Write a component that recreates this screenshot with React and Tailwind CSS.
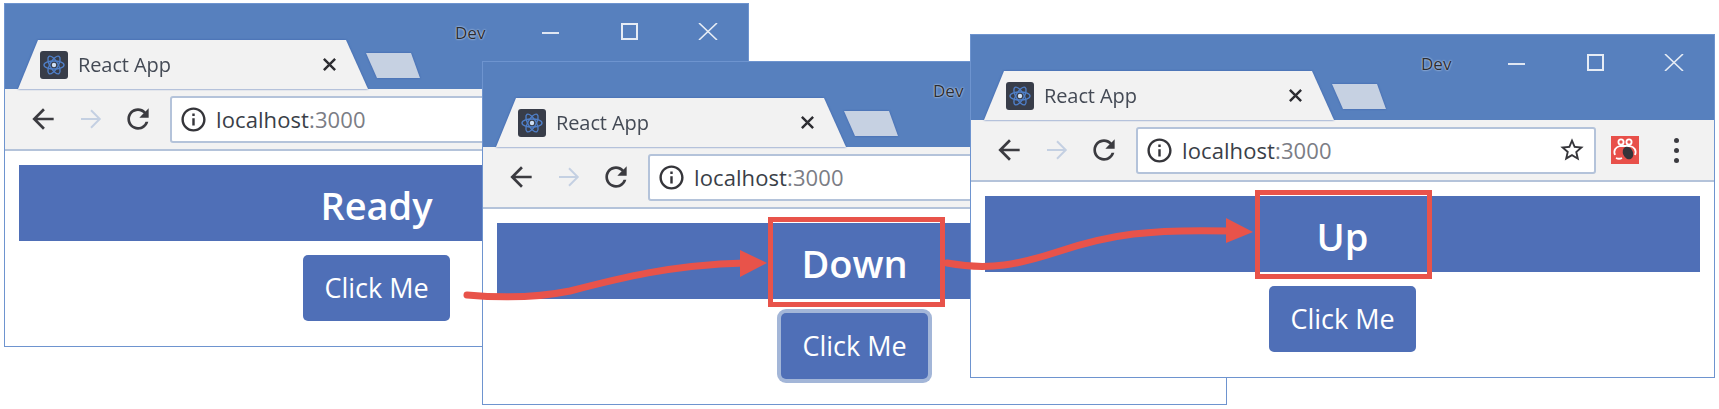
import clsx from 'clsx'

const WINDOWS = [
  { id: 1, pos: 'left-[4px] top-[3px] z-10', label: 'Ready', box: '', focused: false, icons: false },
  { id: 2, pos: 'left-[482px] top-[61px] z-20', label: 'Down', box: 'left-[285px] top-[155px] w-[177px] h-[90px]', focused: true, icons: false },
  { id: 3, pos: 'left-[970px] top-[34px] z-30', label: 'Up', box: 'left-[284px] top-[155px] w-[177px] h-[89px]', focused: false, icons: true },
]

function Favicon() {
  return (
    <svg viewBox="0 0 28 28" className="w-[28px] h-[28px] shrink-0">
      <rect width="28" height="28" rx="3" fill="#383d49" />
      <g fill="none" stroke="#4f7fc8" strokeWidth="1.4">
        <ellipse cx="14" cy="14" rx="10" ry="4" />
        <ellipse cx="14" cy="14" rx="10" ry="4" transform="rotate(60 14 14)" />
        <ellipse cx="14" cy="14" rx="10" ry="4" transform="rotate(120 14 14)" />
      </g>
      <circle cx="14" cy="14" r="2.2" fill="#cfe0f5" />
    </svg>
  )
}

function Icon({ d, className, fill = '#3b3b40' }) {
  return (
    <svg viewBox="0 0 24 24" className={className}>
      <path d={d} fill={fill} />
    </svg>
  )
}

const BACK = 'M20 11H7.83l5.59-5.59L12 4l-8 8 8 8 1.41-1.41L7.83 13H20v-2z'
const RELOAD = 'M17.65 6.35C16.2 4.9 14.21 4 12 4c-4.42 0-7.99 3.58-7.99 8s3.57 8 7.99 8c3.73 0 6.84-2.55 7.73-6h-2.08c-.82 2.33-3.04 4-5.65 4-3.31 0-6-2.69-6-6s2.69-6 6-6c1.66 0 3.14.69 4.22 1.78L13 11h7V4l-2.35 2.35z'
const INFO = 'M11 7h2v2h-2zm0 4h2v6h-2zm1-9C6.48 2 2 6.48 2 12s4.48 10 10 10 10-4.48 10-10S17.52 2 12 2zm0 18c-4.41 0-8-3.59-8-8s3.59-8 8-8 8 3.59 8 8-3.59 8-8 8z'
const STAR = 'M22 9.24l-7.19-.62L12 2 9.19 8.63 2 9.24l5.46 4.73L5.82 21 12 17.27 18.18 21l-1.63-7.03L22 9.24zM12 15.4l-3.76 2.27 1-4.28-3.32-2.88 4.38-.38L12 6.1l1.71 4.04 4.38.38-3.32 2.88 1 4.28L12 15.4z'

function ExtensionIcon() {
  return (
    <svg viewBox="0 0 28 28" className="w-[28px] h-[28px] ml-[15px] shrink-0">
      <rect width="28" height="28" fill="#e8504a" />
      <g fill="none" stroke="#fff" strokeWidth="1.8">
        <circle cx="10" cy="6" r="2.6" />
        <circle cx="18" cy="6" r="2.6" />
        <path d="M4 19c-2-5 1-8 5-9h10c4 1 7 4 5 9" />
        <path d="M5 22c2 1 4 1 6 0" />
      </g>
      <ellipse cx="17" cy="17" rx="5" ry="6.5" fill="#35343a" transform="rotate(-25 17 17)" />
    </svg>
  )
}

function TitleBar() {
  return (
    <div className="flex h-[85px] shrink-0 bg-[#5780be]">
      <div className="flex items-end w-[417px] shrink-0">
        <div className="ml-[13px] drop-shadow-[0_0_1px_#3c62ad]">
          <div className="flex items-center w-[350px] h-[49px] pl-[22px] bg-[#f2f2f2] [clip-path:polygon(0_100%,20px_0,328px_0,100%_100%)]">
            <Favicon />
            <span className="ml-[10px] w-[155px] text-[20px] tracking-[-0.1px] text-[#444a55]">React App</span>
            <svg viewBox="0 0 16 16" className="w-[15px] h-[15px] ml-[89px]">
              <path d="M2 2l12 12M14 2L2 14" stroke="#2e2e33" strokeWidth="2.6" />
            </svg>
          </div>
        </div>
        <div className="-ml-[2px] mb-[11px] drop-shadow-[0_0_1px_#3c62ad]">
          <div className="w-[54px] h-[25px] bg-[#c6d1e2] [clip-path:polygon(0_0,45px_0,100%_100%,11px_100%)]" />
        </div>
      </div>
      <span className="ml-[33px] mt-[18px] h-[22px] text-[17px] leading-[22px] text-[#2a2d33] [text-shadow:0_0_2px_#fff]">Dev</span>
      <div className="ml-[57px] mt-[28px] w-[17px] h-[2px] bg-[#dfe6f2]" />
      <div className="ml-[62px] mt-[19px] w-[17px] h-[17px] border-2 border-[#e6ecf5]" />
      <svg viewBox="0 0 20 17" className="ml-[60px] mt-[19px] w-[20px] h-[17px]">
        <path d="M1 0l18 17M19 0L1 17" stroke="#e6ecf5" strokeWidth="1.6" />
      </svg>
    </div>
  )
}

function Toolbar({ icons }) {
  return (
    <div className="flex items-center h-[62px] shrink-0 bg-[#f2f2f2] border-b-2 border-[#b4c3da]">
      <Icon d={BACK} className="w-[32px] h-[32px] ml-[22px] shrink-0" />
      <svg viewBox="0 0 24 24" className="w-[30px] h-[30px] ml-[17px] shrink-0">
        <path d="M4 12h15M12 5l7 7-7 7" fill="none" stroke="#c4d0e2" strokeWidth="1.6" />
      </svg>
      <Icon d={RELOAD} className="w-[32px] h-[32px] ml-[16px] shrink-0" />
      <div className="flex items-center w-[460px] h-[47px] ml-[16px] shrink-0 bg-white border-2 border-[#b4c3da] rounded-[3px]">
        <Icon d={INFO} className="w-[29px] h-[29px] ml-[7px] shrink-0" fill="#35353a" />
        <span className="ml-[8px] text-[22px] tracking-[0.1px] text-[#3a3f48]">
          localhost<span className="text-[#7b7d85]">:3000</span>
        </span>
        {icons && <Icon d={STAR} className="w-[28px] h-[28px] ml-auto mr-[8px] shrink-0" fill="#35353a" />}
      </div>
      {icons && (
        <>
          <ExtensionIcon />
          <div className="flex flex-col gap-[5px] ml-[35px]">
            <div className="w-[5px] h-[5px] rounded-full bg-[#3b3b40]" />
            <div className="w-[5px] h-[5px] rounded-full bg-[#3b3b40]" />
            <div className="w-[5px] h-[5px] rounded-full bg-[#3b3b40]" />
          </div>
        </>
      )}
    </div>
  )
}

function BrowserWindow({ pos, label, box, focused, icons }) {
  return (
    <div className={clsx('absolute w-[745px] h-[344px] flex flex-col overflow-hidden bg-white border border-[#6e94cf]', pos)}>
      <TitleBar />
      <Toolbar icons={icons} />
      <div className="flex flex-col items-center px-[14px] pt-[14px]">
        <div className="flex items-center justify-center w-full h-[76px] pt-[4px] bg-[#4f6fb7] text-white text-[38px] font-semibold">
          {label}
        </div>
        <button
          className={clsx(
            'w-[147px] h-[66px] mt-[14px] rounded-[5px] bg-[#4f6fb7] text-white text-[27px]',
            focused && 'ring-[4px] ring-[#a3b6d8]'
          )}
        >
          Click Me
        </button>
      </div>
      {box && <div className={clsx('absolute border-[5px] border-[#e8534a]', box)} />}
    </div>
  )
}

function Arrows() {
  return (
    <svg viewBox="0 0 1719 409" className="absolute inset-0 z-40 w-[1719px] h-[409px] pointer-events-none">
      <g fill="none" stroke="#e8534a" strokeWidth="7" strokeLinecap="round">
        <path d="M467 295C500 298 535 298 570 291C620 278 670 265 745 263" />
        <path d="M947 263C990 271 1020 264 1057 252C1110 234 1150 229 1230 231" />
      </g>
      <path d="M740 250L767 263L740 277Z" fill="#e8534a" />
      <path d="M1226 218L1253 232L1226 243Z" fill="#e8534a" />
    </svg>
  )
}

export default function App() {
  return (
    <div className="relative w-[1719px] h-[409px] overflow-hidden bg-white font-['Open_Sans',sans-serif]">
      {WINDOWS.map(w => (
        <BrowserWindow key={w.id} {...w} />
      ))}
      <Arrows />
    </div>
  )
}
